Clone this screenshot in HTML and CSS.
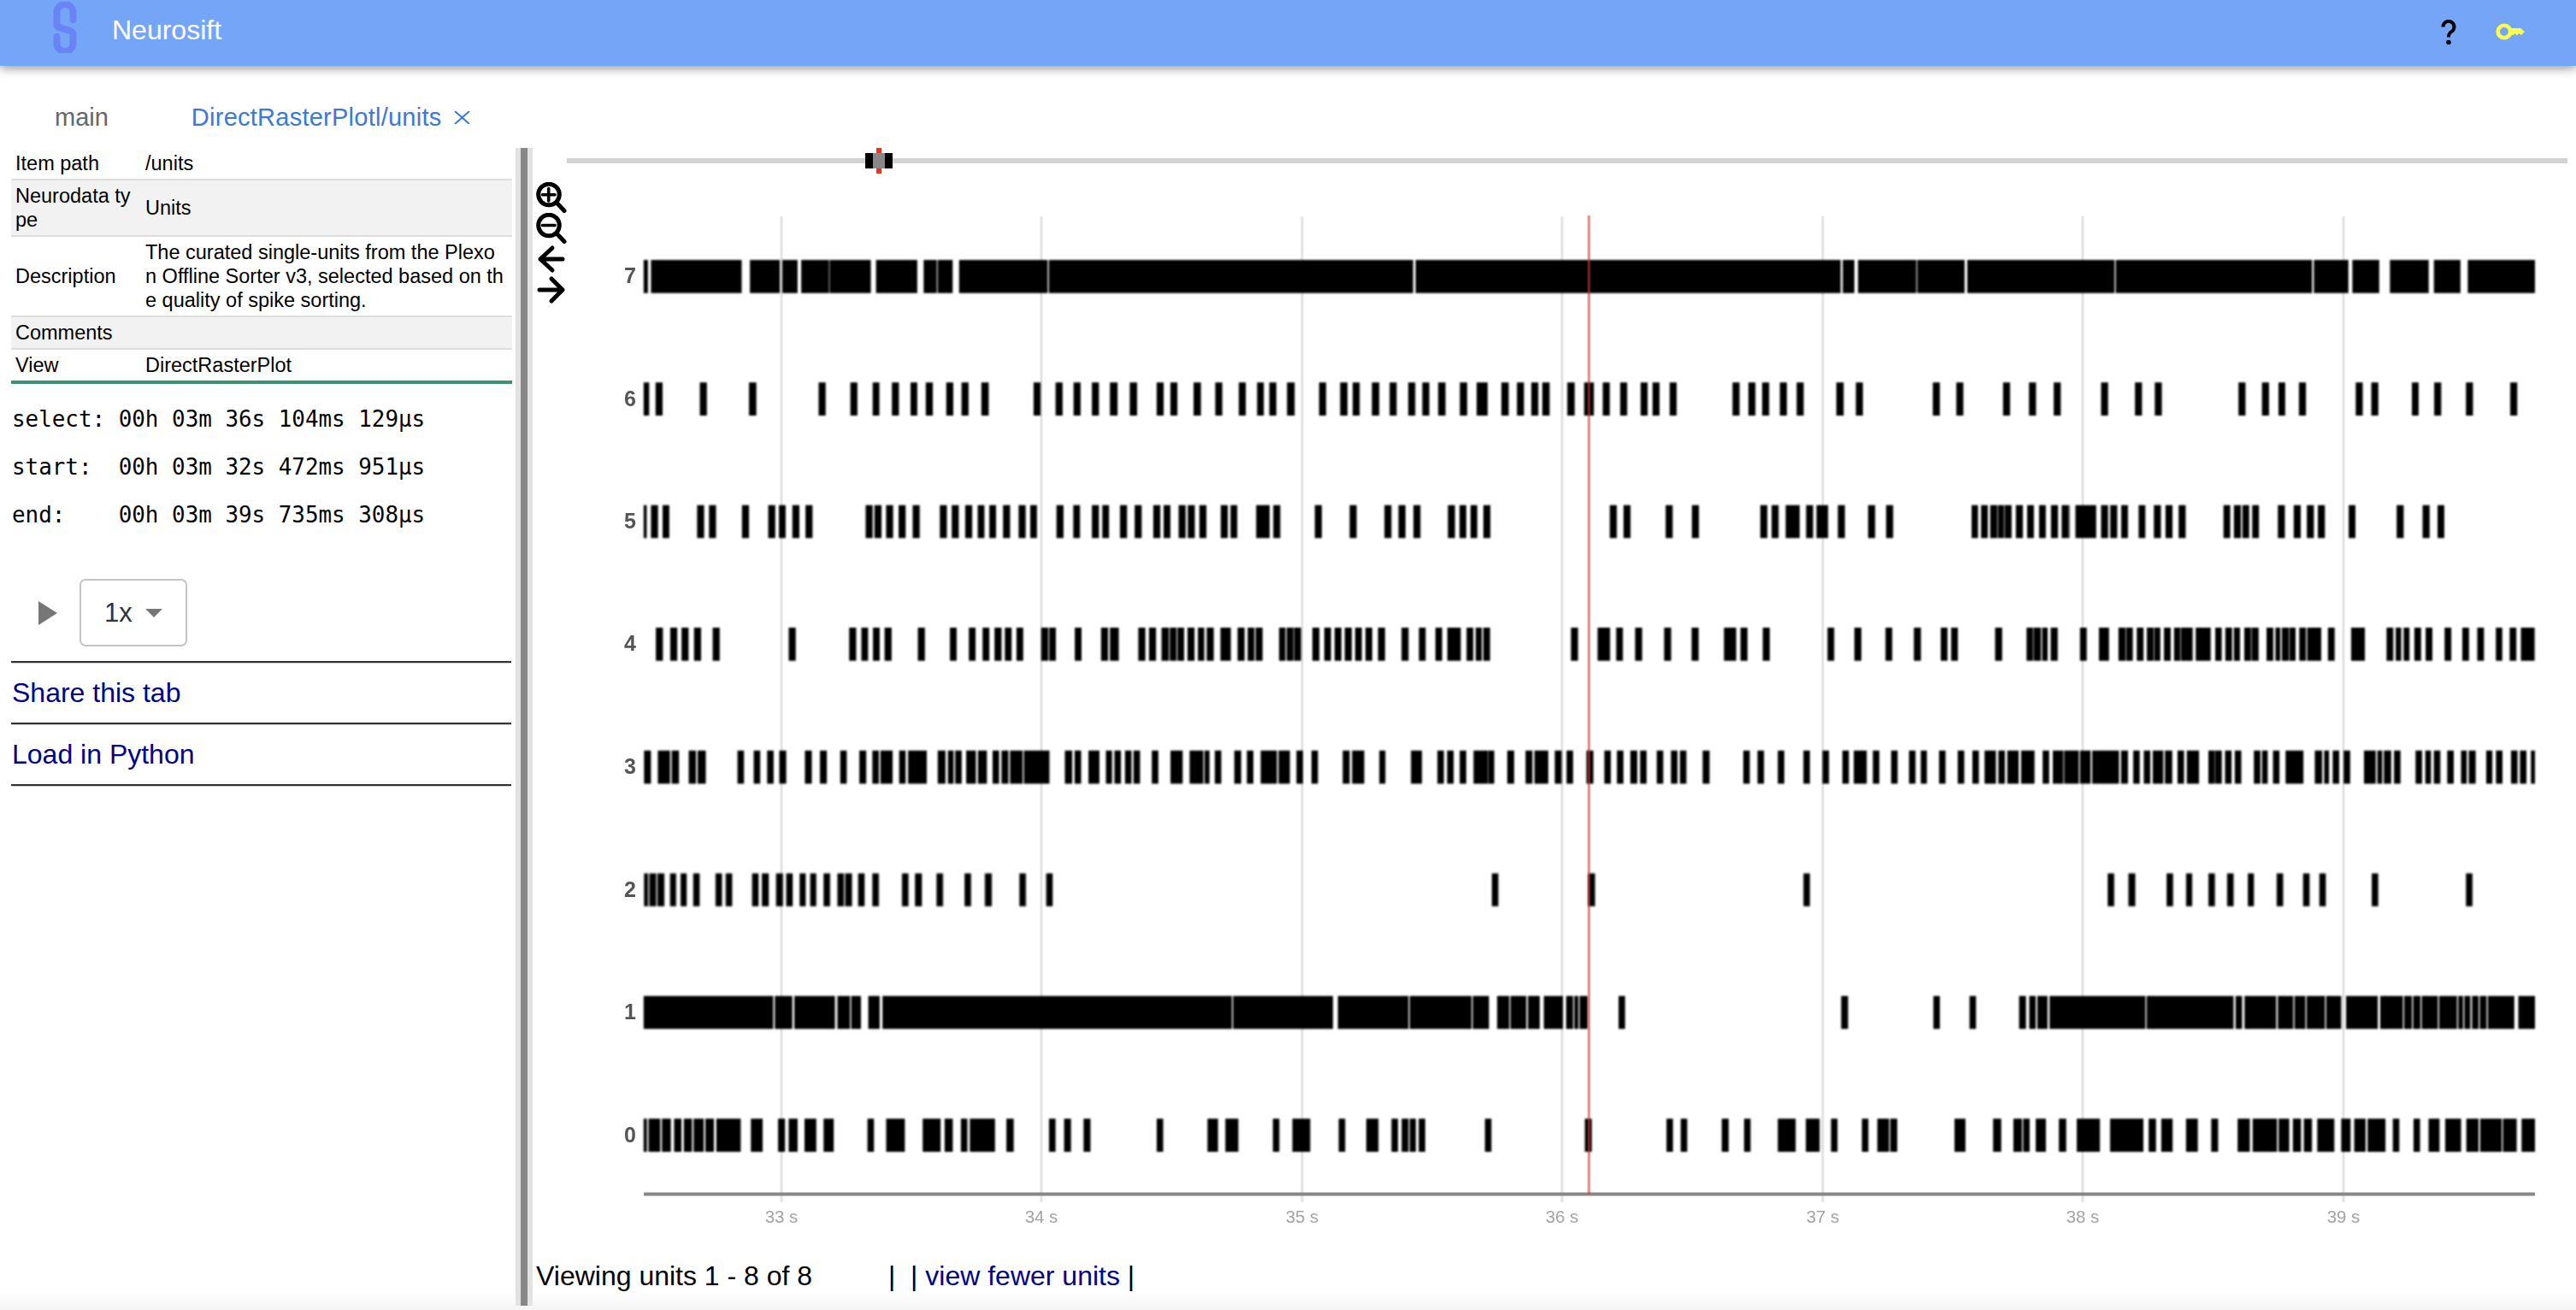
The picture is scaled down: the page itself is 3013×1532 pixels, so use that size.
FILE: index.html
```html
<!DOCTYPE html>
<html lang="en">
<head>
<meta charset="utf-8">
<title>Neurosift</title>
<link rel="stylesheet" href="styles.css">
</head>
<body>
<div class="app">
  <header class="appbar">
    <svg class="logo" viewBox="0 0 28 60"><path d="M23.500 21V12.500a9.500 9.500 0 0 0-19 0V27c0 5 19 5 19 11v10.500a9.500 9.500 0 0 1-19 0V41"/></svg>
    <span class="brand">Neurosift</span>
    <span class="spacer"></span>
    <svg class="help" viewBox="0 0 18 30"><path class="help-stroke" d="M2.500 8.500a6.500 6.500 0 1 1 10.500 5c-3 2.200-4 3.300-4 7"/><circle class="help-dot" cx="9" cy="26.500" r="2.800"/></svg>
    <svg class="key" viewBox="0 0 34 20"><circle class="key-ring" cx="10" cy="10" r="7.300"/><path class="key-blade" d="M18 6H29L34 10L30 14L27 12L25 14.500L22.500 12L21 14H18z"/></svg>
  </header>

  <nav class="tabs">
    <span class="tab">main</span>
    <span class="tab tab-active">DirectRasterPlotl/units
      <svg class="tab-close" viewBox="0 0 19 15"><path d="M1 0L18 15M18 0L1 15"/></svg>
    </span>
  </nav>

  <div class="content">
    <aside class="panel">
      <table class="info">
        <tr><td class="k">Item path</td><td>/units</td></tr>
        <tr class="alt"><td class="k">Neurodata type</td><td>Units</td></tr>
        <tr><td class="k">Description</td><td>The curated single-units from the Plexo<br>n Offline Sorter v3, selected based on th<br>e quality of spike sorting.</td></tr>
        <tr class="alt"><td class="k">Comments</td><td></td></tr>
        <tr class="last"><td class="k">View</td><td>DirectRasterPlot</td></tr>
      </table>
      <div class="times">
        <div class="time">select: 00h 03m 36s 104ms 129µs</div>
        <div class="time">start:  00h 03m 32s 472ms 951µs</div>
        <div class="time">end:    00h 03m 39s 735ms 308µs</div>
      </div>
      <div class="controls">
        <svg class="play" viewBox="0 0 22 28"><path d="M0 0L22 14L0 28z"/></svg>
        <div class="speed"><span>1x</span><svg class="caret" viewBox="0 0 20 10"><path d="M0 0H20L10 10z"/></svg></div>
      </div>
      <hr class="rule">
      <a class="action" href="#">Share this tab</a>
      <hr class="rule">
      <a class="action" href="#">Load in Python</a>
      <hr class="rule">
    </aside>

    <div class="splitter"><div class="splitter-bar"></div></div>

    <main class="main">
      <div class="toolbar">
        <svg class="tool" viewBox="0 0 36 36"><circle cx="15" cy="14.500" r="12.300"/><path d="M24.500 24.500L33 33.500"/><path class="tool-thin" d="M7.500 14.700H22M14.700 7.500V22"/></svg>
        <svg class="tool" viewBox="0 0 36 36"><circle cx="15" cy="14.500" r="12.300"/><path d="M24.500 24.500L33 33.500"/><path class="tool-thin" d="M7.500 14.500H22"/></svg>
        <svg class="tool" viewBox="0 0 36 36"><path d="M5 18H31M19 5L5 18L19 31"/></svg>
        <svg class="tool" viewBox="0 0 36 36"><path d="M4 18H31M18 5L31 18L18 31"/></svg>
      </div>

      <svg class="plot" viewBox="623 173 2390 1297">
        <rect class="track" x="663" y="185" width="2340" height="6"/>
        <rect class="marker" x="1025" y="173" width="6" height="30"/>
        <rect class="handle" x="1012" y="179" width="32" height="18"/>
        <rect class="handle-in" x="1021" y="179" width="14" height="18"/>

        <path class="grid" d="M914 253V1406M1218 253V1406M1523 253V1406M1827 253V1406M2132 253V1406M2436 253V1406M2741 253V1406"/>

        <g class="spikes">
          <g transform="translate(0 323.3)">
            <path transform="translate(740 0) scale(.35714 1)" d="M36 0H50M60 0H357M384 0H482M490 0H540M552 0H643M645 0H780M797 0H932M953 0H996M999 0H1048M1069 0H1359M1363 0H1568"/>
            <path transform="translate(1300 0) scale(.35714 1)" d="M0 0H988M996 0H1568"/>
            <path transform="translate(1860 0) scale(.35714 1)" d="M0 0H820M827 0H865M877 0H1068M1071 0H1226M1235 0H1568"/>
            <path transform="translate(2420 0) scale(.35714 1)" d="M0 0H149M153 0H796M802 0H915M928 0H1016M1051 0H1178M1195 0H1282M1306 0H1526"/>
          </g>
          <g transform="translate(0 466.7)">
            <path transform="translate(740 0) scale(.35714 1)" d="M36 0H54M75 0H98M220 0H243M381 0H405M609 0H632M713 0H736M786 0H808M849 0H872M910 0H932M960 0H983M1027 0H1050M1077 0H1100M1142 0H1166M1313 0H1336M1385 0H1408M1444 0H1467M1504 0H1527M1563 0H1568"/>
            <path transform="translate(1300 0) scale(.35714 1)" d="M0 0H20M60 0H84M148 0H171M193 0H216M269 0H293M340 0H363M417 0H440M477 0H499M517 0H540M575 0H600M680 0H703M749 0H773M790 0H813M853 0H877M911 0H934M972 0H995M1018 0H1041M1070 0H1094M1141 0H1165M1196 0H1232M1277 0H1301M1328 0H1351M1375 0H1398M1411 0H1435M1493 0H1517M1548 0H1568"/>
            <path transform="translate(1860 0) scale(.35714 1)" d="M0 0H12M41 0H64M98 0H121M165 0H188M204 0H227M260 0H283M466 0H489M518 0H541M563 0H586M621 0H644M676 0H699M806 0H830M870 0H893M1122 0H1145M1199 0H1222M1352 0H1375M1437 0H1460M1518 0H1541"/>
            <path transform="translate(2420 0) scale(.35714 1)" d="M105 0H128M216 0H239M281 0H304M555 0H578M632 0H655M686 0H708M753 0H776M939 0H962M990 0H1013M1123 0H1145M1196 0H1219M1300 0H1323M1445 0H1468"/>
          </g>
          <g transform="translate(0 610)">
            <path transform="translate(740 0) scale(.35714 1)" d="M36 0H46M60 0H83M98 0H120M211 0H234M250 0H273M358 0H381M444 0H467M479 0H501M523 0H546M566 0H589M763 0H786M792 0H815M830 0H853M871 0H894M917 0H940M1006 0H1029M1045 0H1068M1089 0H1112M1130 0H1152M1168 0H1190M1213 0H1236M1264 0H1287M1302 0H1324M1388 0H1411M1443 0H1465M1504 0H1527M1538 0H1560"/>
            <path transform="translate(1300 0) scale(.35714 1)" d="M28 0H51M76 0H99M137 0H160M171 0H193M220 0H243M250 0H273M288 0H311M358 0H381M390 0H412M474 0H518M530 0H553M666 0H689M780 0H803M894 0H917M940 0H963M989 0H1012M1102 0H1125M1140 0H1162M1176 0H1198M1218 0H1241"/>
            <path transform="translate(1860 0) scale(.35714 1)" d="M64 0H87M109 0H132M247 0H270M333 0H356M557 0H580M594 0H617M640 0H686M707 0H730M741 0H779M811 0H834M910 0H933M969 0H992M1249 0H1270M1280 0H1302M1310 0H1333M1335 0H1355M1357 0H1380M1394 0H1417M1431 0H1453M1470 0H1492M1509 0H1532M1544 0H1567"/>
            <path transform="translate(2420 0) scale(.35714 1)" d="M0 0H2M21 0H89M105 0H128M135 0H158M171 0H193M228 0H250M278 0H301M316 0H339M359 0H382M506 0H528M540 0H563M568 0H590M600 0H622M684 0H707M736 0H759M779 0H802M815 0H838M916 0H938M1073 0H1096M1158 0H1181M1207 0H1229"/>
          </g>
          <g transform="translate(0 753.4)">
            <path transform="translate(740 0) scale(.35714 1)" d="M76 0H99M123 0H146M160 0H183M201 0H224M262 0H285M511 0H534M709 0H732M749 0H771M787 0H809M825 0H848M934 0H957M1039 0H1061M1101 0H1123M1146 0H1168M1185 0H1208M1219 0H1241M1257 0H1279M1338 0H1361M1364 0H1386M1448 0H1470M1534 0H1557M1563 0H1568"/>
            <path transform="translate(1300 0) scale(.35714 1)" d="M0 0H24M88 0H111M123 0H146M164 0H188M191 0H213M216 0H238M249 0H272M283 0H304M312 0H335M357 0H391M413 0H436M446 0H468M472 0H495M549 0H570M574 0H596M598 0H621M658 0H681M697 0H719M731 0H753M764 0H787M798 0H820M832 0H854M873 0H896M950 0H973M1007 0H1029M1061 0H1083M1100 0H1144M1163 0H1185M1193 0H1213M1218 0H1240M1505 0H1528"/>
            <path transform="translate(1860 0) scale(.35714 1)" d="M24 0H65M85 0H107M147 0H170M242 0H265M332 0H355M438 0H478M492 0H515M565 0H588M777 0H799M865 0H888M967 0H989M1060 0H1083M1148 0H1170M1182 0H1204M1326 0H1349M1429 0H1450M1452 0H1476M1480 0H1498M1508 0H1531"/>
            <path transform="translate(2420 0) scale(.35714 1)" d="M36 0H58M98 0H131M162 0H185M187 0H209M222 0H244M255 0H277M279 0H299M311 0H333M344 0H365M367 0H405M415 0H464M479 0H500M512 0H534M540 0H560M574 0H596M598 0H621M647 0H669M676 0H692M697 0H720M722 0H742M754 0H776M780 0H826M848 0H870M924 0H969M1040 0H1062M1070 0H1088M1096 0H1115M1131 0H1153M1168 0H1190M1230 0H1252M1288 0H1310M1337 0H1359M1398 0H1419M1443 0H1465M1480 0H1525"/>
          </g>
          <g transform="translate(0 897.2)">
            <path transform="translate(740 0) scale(.47513 1)" d="M28 0H45M62 0H92M96 0H114M138 0H156M160 0H180M258 0H274M298 0H314M331 0H347M361 0H378M424 0H441M461 0H478M511 0H527M558 0H575M590 0H606M610 0H640M656 0H672M678 0H724M751 0H770M776 0H790M794 0H810M821 0H845M850 0H872M886 0H902M908 0H925M929 0H960M963 0H1026M1064 0H1082M1088 0H1104M1122 0H1149M1165 0H1180M1186 0H1202M1212 0H1228M1233 0H1249M1278 0H1294M1324 0H1354M1371 0H1405M1408 0H1420M1433 0H1449M1481 0H1498M1512 0H1528M1546 0H1568"/>
            <path transform="translate(1485 0) scale(.47513 1)" d="M0 0H18M22 0H50M66 0H82M103 0H119M180 0H197M203 0H233M270 0H285M348 0H375M413 0H429M437 0H453M468 0H484M502 0H537M538 0H553M585 0H602M630 0H647M652 0H686M702 0H719M731 0H747M780 0H797M824 0H840M855 0H871M888 0H905M912 0H928M953 0H969M988 0H1004M1010 0H1026M1066 0H1083M1166 0H1182M1201 0H1217M1251 0H1267M1314 0H1330M1361 0H1377M1410 0H1426M1438 0H1470M1485 0H1501M1530 0H1546"/>
            <path transform="translate(2230 0) scale(.47513 1)" d="M6 0H22M35 0H50M80 0H96M126 0H142M162 0H178M192 0H220M226 0H242M248 0H276M282 0H315M335 0H351M360 0H386M388 0H424M427 0H453M457 0H523M528 0H545M558 0H574M584 0H600M606 0H632M636 0H654M667 0H683M690 0H720M743 0H759M760 0H776M784 0H800M808 0H824M855 0H871M875 0H889M902 0H918M933 0H977M1005 0H1023M1028 0H1040M1049 0H1065M1076 0H1092M1126 0H1155M1159 0H1171M1175 0H1193M1200 0H1216M1253 0H1269M1277 0H1291M1298 0H1314M1331 0H1347M1365 0H1379M1384 0H1401M1427 0H1442M1451 0H1467M1488 0H1504M1510 0H1526M1537 0H1547"/>
          </g>
          <g transform="translate(0 1040.6)">
            <path transform="translate(740 0) scale(.47513 1)" d="M28 0H38M41 0H58M61 0H78M92 0H107M118 0H133M149 0H165M204 0H220M229 0H245M294 0H310M318 0H335M353 0H370M378 0H394M411 0H426M437 0H452M470 0H486M504 0H520M523 0H540M555 0H571M590 0H606M663 0H679M695 0H712M748 0H764M817 0H833M867 0H884M952 0H968M1018 0H1034"/>
            <path transform="translate(1485 0) scale(.47513 1)" d="M547 0H563M784 0H801M1314 0H1330"/>
            <path transform="translate(2230 0) scale(.47513 1)" d="M495 0H511M546 0H563M640 0H656M688 0H703M743 0H759M789 0H805M840 0H855M911 0H927M976 0H992M1016 0H1032M1145 0H1161M1377 0H1393"/>
          </g>
          <g transform="translate(0 1184)">
            <path transform="translate(740 0) scale(.47513 1)" d="M27 0H346M350 0H393M398 0H498M504 0H535M538 0H562M580 0H608M615 0H1475M1478 0H1568"/>
            <path transform="translate(1485 0) scale(.47513 1)" d="M0 0H156M168 0H342M345 0H497M500 0H540M560 0H590M593 0H632M636 0H665M675 0H722M730 0H747M750 0H760M763 0H783M859 0H875M1407 0H1424"/>
            <path transform="translate(2230 0) scale(.47513 1)" d="M66 0H82M155 0H171M277 0H294M302 0H318M322 0H347M352 0H588M591 0H805M810 0H826M832 0H910M914 0H952M955 0H982M985 0H1030M1033 0H1070M1082 0H1160M1166 0H1222M1225 0H1244M1247 0H1265M1268 0H1308M1311 0H1355M1358 0H1370M1373 0H1388M1392 0H1408M1411 0H1428M1431 0H1496M1506 0H1547"/>
          </g>
          <g transform="translate(0 1327.6)">
            <path transform="translate(740 0) scale(.47513 1)" d="M27 0H35M39 0H68M72 0H94M102 0H120M126 0H146M150 0H175M179 0H200M206 0H266M291 0H320M358 0H375M384 0H406M423 0H452M470 0H495M578 0H594M624 0H670M714 0H758M768 0H788M808 0H824M830 0H892M920 0H938M1025 0H1041M1062 0H1079M1110 0H1127M1290 0H1306M1415 0H1441M1459 0H1491"/>
            <path transform="translate(1485 0) scale(.47513 1)" d="M8 0H24M56 0H100M170 0H186M238 0H268M300 0H316M325 0H342M345 0H360M367 0H383M530 0H546M776 0H793M977 0H993M1012 0H1028M1113 0H1130M1168 0H1184M1251 0H1295M1320 0H1354M1382 0H1398M1458 0H1474M1496 0H1525M1528 0H1545"/>
            <path transform="translate(2230 0) scale(.47513 1)" d="M118 0H145M213 0H233M263 0H284M287 0H303M318 0H343M375 0H393M419 0H476M501 0H583M596 0H614M627 0H655M688 0H717M750 0H767M815 0H845M852 0H912M916 0H942M951 0H971M978 0H998M1011 0H1053M1070 0H1093M1102 0H1130M1135 0H1179M1197 0H1213M1248 0H1264M1285 0H1312M1326 0H1365M1378 0H1408M1412 0H1465M1468 0H1502M1514 0H1547"/>
          </g>
        </g>

        <path class="axis" d="M753 1396.500H2965"/>
        <path class="cursor" d="M1858.500 252V1397"/>

        <text class="unit" x="744" y="331">7</text>
        <text class="unit" x="744" y="474.500">6</text>
        <text class="unit" x="744" y="618">5</text>
        <text class="unit" x="744" y="761">4</text>
        <text class="unit" x="744" y="905">3</text>
        <text class="unit" x="744" y="1048.500">2</text>
        <text class="unit" x="744" y="1192">1</text>
        <text class="unit" x="744" y="1335.500">0</text>

        <text class="tick" x="914" y="1430">33 s</text>
        <text class="tick" x="1218" y="1430">34 s</text>
        <text class="tick" x="1523" y="1430">35 s</text>
        <text class="tick" x="1827" y="1430">36 s</text>
        <text class="tick" x="2132" y="1430">37 s</text>
        <text class="tick" x="2436" y="1430">38 s</text>
        <text class="tick" x="2741" y="1430">39 s</text>
      </svg>

      <div class="pager">
        <span class="pager-count">Viewing units 1 - 8 of 8</span>
        <span class="pager-links">| &nbsp;| <a href="#">view fewer units</a> |</span>
      </div>
    </main>
  </div>
  <div class="page-foot"></div>
</div>
</body>
</html>
```

FILE: styles.css
```css
* { box-sizing: border-box; }
html { height: 100%; background: #fff; }
body { margin: 0; height: 100%; font-family: "Liberation Sans", Arial, sans-serif; color: #000; overflow: hidden; }
.app { display: flex; flex-direction: column; height: 1532px; position: relative; }

.appbar {
  height: 77px; flex: none; display: flex; align-items: center;
  background: #74a5f7; color: #fff; padding-left: 62px;
  box-shadow: 0 3px 11px rgba(0,0,0,.42); position: relative; z-index: 2;
}
.logo { width: 28px; height: 60px; margin-top: -13px; }
.logo path { fill: none; stroke: #6a84f6; stroke-width: 8; stroke-linecap: round; }
.brand { font-size: 32px; margin-left: 41px; margin-top: -6px; }
.spacer { flex: 1; }
.help { width: 18px; height: 30px; margin-top: -2px; }
.help-stroke { fill: none; stroke: #000; stroke-width: 4; }
.help-dot { fill: #000; }
.key { width: 34px; height: 20px; margin: -3px 60px 0 46px; }
.key-ring { fill: none; stroke: #ffff4d; stroke-width: 4.600; }
.key-blade { fill: #ffff4d; }

.tabs { height: 96px; flex: none; display: flex; align-items: center; padding-left: 64px; font-size: 29px; color: #666; }
.tab { margin-right: 97px; margin-top: 24px; }
.tab-active { color: #3c78d8; letter-spacing: .25px; display: flex; align-items: center; }
.tab-close { width: 19px; height: 15px; margin-left: 15px; }
.tab-close path { fill: none; stroke: #3c78d8; stroke-width: 2; }

.content { flex: none; height: 1354px; display: flex; }
.panel { width: 603px; flex: none; padding: 0 5px 0 13px; }

.info { width: 586px; table-layout: fixed; border-collapse: collapse; font-size: 23.500px; line-height: 28px; }
.info td { padding: 4px 0 4px 5px; border-bottom: 2px solid #ddd; word-break: break-all; }
.info .k { width: 152px; }
.info .alt td { background: #f2f2f2; }
.info .last td { border-bottom: 4px solid #3f8f73; }

.times { margin-top: 27px; font-family: "DejaVu Sans Mono", monospace; font-size: 25.900px; }
.time { white-space: pre; height: 56px; line-height: 28px; margin-left: 1px; }

.controls { display: flex; align-items: center; margin-top: 33px; }
.play { width: 22px; height: 28px; margin-left: 32px; }
.play path { fill: #777; }
.speed {
  width: 126px; height: 79px; margin-left: 26px; display: flex; align-items: center;
  border: 2px solid #c4c4c4; border-radius: 7px; padding-left: 27px; font-size: 31px; color: #333;
}
.caret { width: 20px; height: 10px; margin-left: 15px; }
.caret path { fill: #777; }

.rule { height: 3px; border: 0; margin: 0; background: #ccc; border-top: 2px solid #333; width: 585px; }
.controls + .rule { margin-top: 17px; }
.action { display: block; height: 69px; line-height: 68px; font-size: 32px; color: #00008b; text-decoration: none; margin-left: 1px; }

.splitter { width: 20px; flex: none; background: #e2e2e2; padding-left: 5.500px; }
.splitter-bar { width: 8.500px; height: 100%; background: #888; }

.main { flex: 1; min-width: 0; position: relative; }
.toolbar { position: absolute; left: 4px; top: 40px; display: flex; flex-direction: column; }
.tool { width: 36px; height: 36px; display: block; fill: none; stroke: #000; stroke-width: 5; stroke-linecap: round; stroke-linejoin: round; }
.tool-thin { stroke-width: 3.600; }

.plot { display: block; width: 2390px; height: 1297px; }
.track { fill: #d3d3d3; }
.marker { fill: #f03020; }
.handle { fill: #000; }
.handle-in { fill: #888; }
.grid { stroke: #e4e4e4; stroke-width: 3; fill: none; }
.spikes { filter: blur(.8px); }
.spikes path { fill: none; stroke: #000; stroke-width: 38.700; }
.axis { stroke: #888; stroke-width: 4; fill: none; }
.cursor { stroke: rgba(232,48,36,.52); stroke-width: 3.500; fill: none; }
.unit { font-size: 25px; font-weight: bold; fill: #555; text-anchor: end; }
.tick { font-size: 20.500px; fill: #a4a4a4; text-anchor: middle; }

.pager { display: flex; font-size: 32px; line-height: 36px; margin-top: 4px; padding-left: 4px; white-space: nowrap; }
.pager-count { width: 412px; }
.pager-links a { color: #00008b; text-decoration: none; }

.page-foot { position: absolute; left: 0; right: 0; bottom: 0; height: 22px; background: linear-gradient(#fff, #f5f5f5); z-index: -1; }
```
